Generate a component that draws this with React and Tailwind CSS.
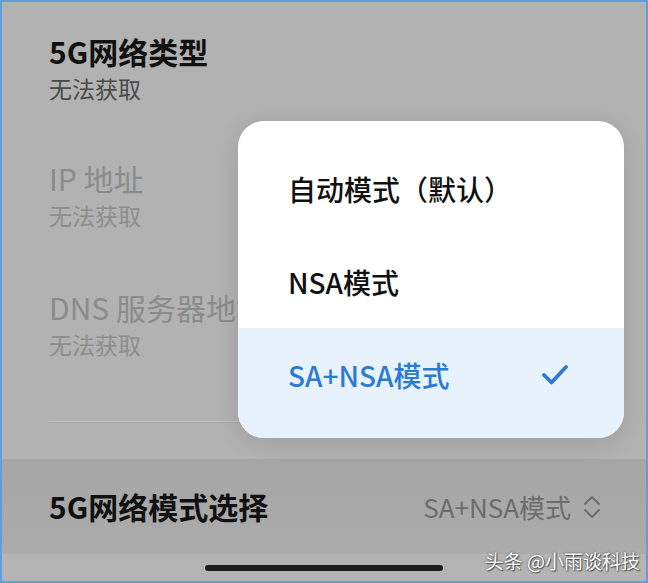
import React from 'react';

const font = { fontFamily: '"Noto Sans CJK SC", "Noto Sans", sans-serif' };

const infoItems = [
  { title: '5G网络类型', value: '无法获取', enabled: true },
  { title: 'IP 地址', value: '无法获取', enabled: false },
  { title: 'DNS 服务器地址', value: '无法获取', enabled: false },
];

const modes = [
  { name: '自动模式（默认）', selected: false },
  { name: 'NSA模式', selected: false },
  { name: 'SA+NSA模式', selected: true },
];

const UpDown = () => (
  <svg width="20" height="26" viewBox="0 0 20 26" fill="none" stroke="#6a6a6a" strokeWidth="1.8" strokeLinecap="round" strokeLinejoin="round">
    <path d="M3 10 L10 3 L17 10" />
    <path d="M3 16 L10 23 L17 16" />
  </svg>
);

const Check = () => (
  <svg width="26" height="22" viewBox="0 0 26 22" fill="none" stroke="#2b7bd3" strokeWidth="3.8" strokeLinecap="round" strokeLinejoin="round">
    <path d="M2 11 L9.5 18.5 L24 3" />
  </svg>
);

const App = () => {
  return (
    <div
      className="relative w-[648px] h-[583px] overflow-hidden border-2 border-[#5b9ee2] bg-[#b2b2b2] flex flex-col"
      style={font}
    >
      <div className="flex flex-col gap-[58px] pt-[32px] px-[47px]">
        {infoItems.map((item, i) => (
          <div key={i} className={`flex flex-col whitespace-nowrap ${i === 2 ? 'pt-[2px]' : ''}`}>
            <div
              className={`text-[30px] leading-[34px] ${item.enabled ? 'font-bold text-[#111]' : 'text-[#8b8b8b]'}`}
            >
              {item.title}
            </div>
            <div
              className={`mt-[5px] text-[23px] leading-[30px] ${item.enabled ? 'text-[#4a4a4a]' : 'text-[#8d8d8d]'}`}
            >
              {item.value}
            </div>
          </div>
        ))}
      </div>

      <div className="mt-[62px] ml-[47px] mr-[44px] h-[2px] bg-[#bdbdbd] border-b border-[#a9a9a9]" />

      <div className="mt-[36px] h-[95px] bg-gradient-to-b from-[#a6a6a6] to-[#ababab] flex items-center justify-between pl-[47px] pr-[44px]">
        <span className="text-[30px] font-bold text-[#111] whitespace-nowrap">5G网络模式选择</span>
        <div className="flex items-center gap-[11px]">
          <span className="text-[26px] text-[#6c6c6c] whitespace-nowrap">SA+NSA模式</span>
          <UpDown />
        </div>
      </div>

      <div className="flex-1 flex items-center justify-center bg-[#b4b4b4]">
        <div className="w-[238px] h-[6px] rounded-full bg-[#1c1c1c]" />
      </div>

      <div
        className="absolute right-[6px] bottom-[6px] text-[19px] text-white whitespace-nowrap"
        style={{ textShadow: '0 0 2px rgba(0,0,0,0.6), 1px 1px 1px rgba(0,0,0,0.5)' }}
      >
        头条 @小雨谈科技
      </div>

      <div className="absolute left-[236px] top-[119px] w-[386px] h-[317px] rounded-[26px] bg-white overflow-hidden shadow-[0_4px_24px_rgba(0,0,0,0.12)] flex flex-col pt-[21px]">
        {modes.map((m, i) => (
          <div
            key={i}
            className={`flex items-center justify-between pl-[50px] pr-[56px] ${m.selected ? 'h-[110px] pb-[17px] bg-[#e8f2fc]' : 'h-[93px]'}`}
          >
            <span
              className={`text-[28px] font-medium whitespace-nowrap ${m.selected ? 'text-[#2b7bd3]' : 'text-[#111]'}`}
            >
              {m.name}
            </span>
            {m.selected && <Check />}
          </div>
        ))}
      </div>
    </div>
  );
};

export default App;
